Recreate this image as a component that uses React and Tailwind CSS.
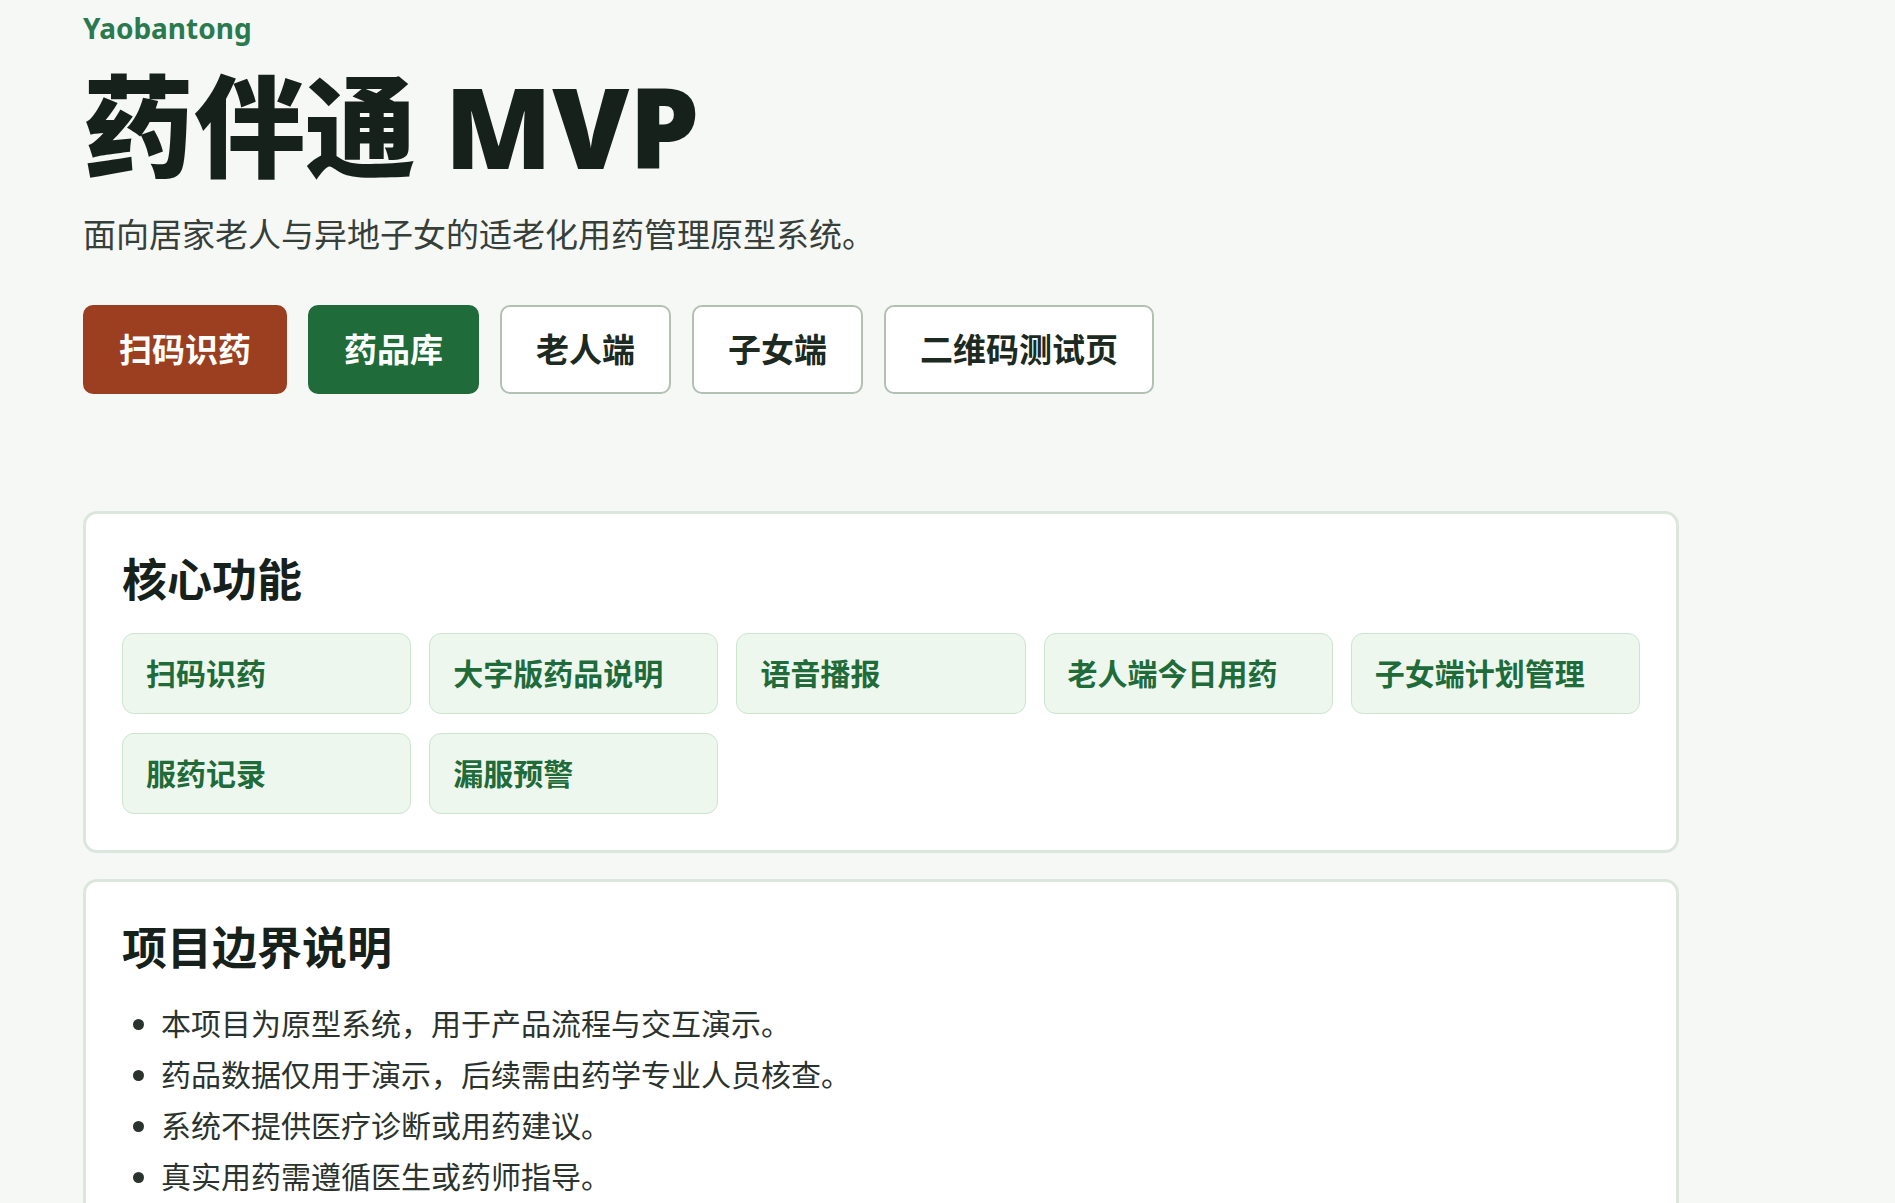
const buttons = [
  { label: "扫码识药", tone: "rust" },
  { label: "药品库", tone: "green" },
  { label: "老人端", tone: "outline" },
  { label: "子女端", tone: "outline" },
  { label: "二维码测试页", tone: "outline" },
]

const toneClass = {
  rust: "bg-[#9b3f20] border-[#9b3f20] text-white",
  green: "bg-[#1f6b39] border-[#1f6b39] text-white",
  outline: "bg-white border-[#b3c0b3] text-[#1c2a21]",
}

const features = ["扫码识药", "大字版药品说明", "语音播报", "老人端今日用药", "子女端计划管理", "服药记录", "漏服预警"]

const notes = [
  "本项目为原型系统，用于产品流程与交互演示。",
  "药品数据仅用于演示，后续需由药学专业人员核查。",
  "系统不提供医疗诊断或用药建议。",
  "真实用药需遵循医生或药师指导。",
]

function Card({ title, children }) {
  return (
    <section className="bg-white border-[3px] border-[#dde6dd] rounded-[14px] p-[36px]">
      <h2 className="text-[45px] leading-[1.35] font-bold text-[#17211b]">{title}</h2>
      {children}
    </section>
  )
}

export default function App() {
  return (
    <div
      className="min-h-screen bg-[#f6f8f6] text-[#1c2a21]"
      style={{ fontFamily: '"Noto Sans", "Noto Sans CJK SC", sans-serif' }}
    >
      <main className="ml-[83px] max-w-[1596px] pt-[12px] pb-[40px]">
        {/* Header */}
        <header>
          <p className="text-[28px] leading-[1.2] font-bold text-[#2b7a4f]">Yaobantong</p>
          <h1 className="mt-[17px] text-[111px] leading-[1.15] font-black text-[#17211b]">药伴通 MVP</h1>
          <p className="mt-[22px] text-[33px] leading-[1.4] text-[#363f39]">
            面向居家老人与异地子女的适老化用药管理原型系统。
          </p>
          <nav className="mt-[47px] flex gap-[21px]">
            {buttons.map((b) => (
              <button
                key={b.label}
                className={`h-[89px] px-[34px] border-2 rounded-[10px] text-[33px] font-bold ${toneClass[b.tone]}`}
              >
                {b.label}
              </button>
            ))}
          </nav>
        </header>

        <div className="mt-[117px] flex flex-col gap-[26px]">
          <Card title="核心功能">
            <div className="mt-[22px] grid grid-cols-5 gap-x-[18px] gap-y-[19px]">
              {features.map((f) => (
                <div
                  key={f}
                  className="h-[81px] flex items-center px-[23px] bg-[#edf7ee] border border-[#cfe3d1] rounded-[12px] text-[30px] font-bold text-[#1f6b39]"
                >
                  {f}
                </div>
              ))}
            </div>
          </Card>

          <Card title="项目边界说明">
            <ul className="mt-[19px] list-disc pl-[39px] text-[30px] leading-[1.7] text-[#2b332e]">
              {notes.map((n) => (
                <li key={n}>{n}</li>
              ))}
            </ul>
          </Card>
        </div>
      </main>
    </div>
  )
}
